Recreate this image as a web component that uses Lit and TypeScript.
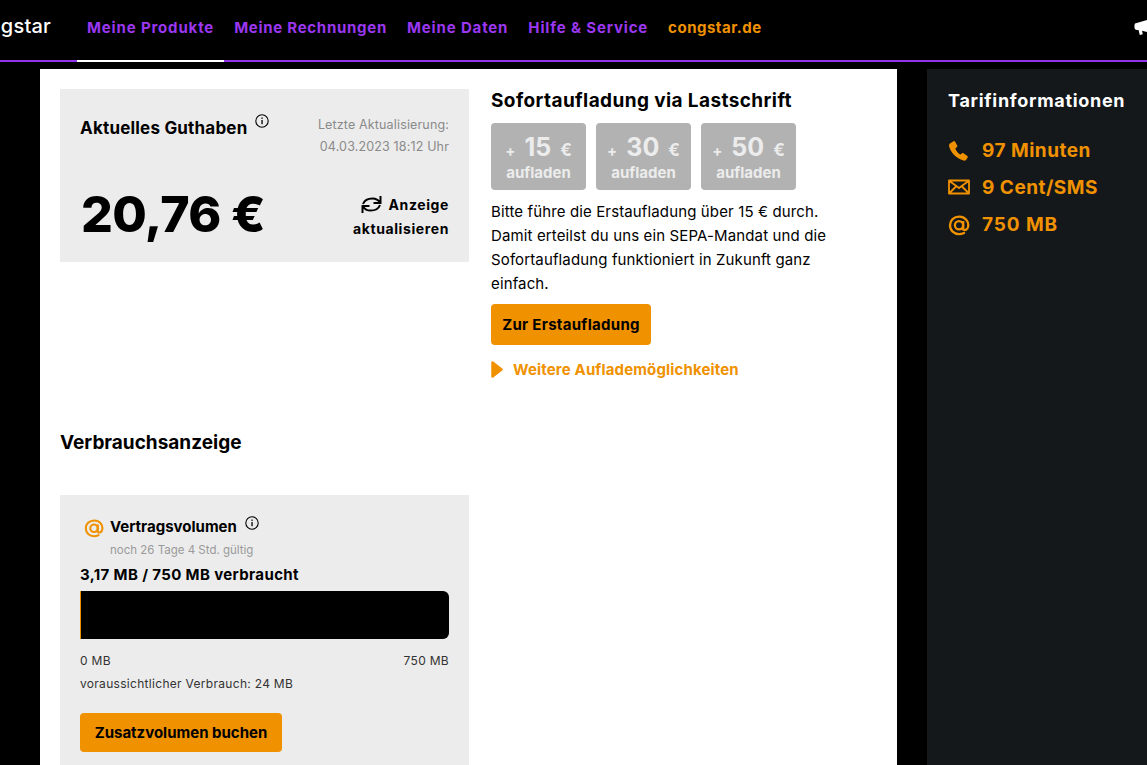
import { LitElement, css, html } from 'lit';
import { customElement } from 'lit/decorators.js';

const info = html`<svg class="info" viewBox="0 0 14 14" width="14" height="14">
  <circle cx="7" cy="7" r="6.2" fill="none" stroke="#000" stroke-width="1.1"></circle>
  <rect x="6.4" y="6" width="1.3" height="4.2" fill="#000"></rect>
  <rect x="6.4" y="3.5" width="1.3" height="1.4" fill="#000"></rect>
</svg>`;

const at = (size: number) => html`<svg viewBox="0 0 22 22" width=${size} height=${size}>
  <path d="M15.2 15.6c1.9 1 4.300.2 4.900-3 .9-5.300-3-9.900-8.900-9.900C5.700 2.700 2 6.500 2 11.300c0 5.300 4 8.800 9 8.800 1.900 0 3.500-.4 5-1.200" fill="none" stroke="#f09100" stroke-width="2.300" stroke-linecap="round"></path>
  <circle cx="11" cy="11.300" r="4.100" fill="none" stroke="#f09100" stroke-width="2.300"></circle>
  <path d="M15.200 7v8.200" fill="none" stroke="#f09100" stroke-width="2.300"></path>
</svg>`;

// bar track is 369px wide, the used part is snapped down to whole pixels
const usedWidth = Math.floor((3.17 / 750) * 369);

@customElement('app-root')
export class AppRoot extends LitElement {
  render() {
    return html`
      <header class="top">
        <div class="logo"><span>congstar</span></div>
        <nav class="nav">
          <a class="active">Meine Produkte</a>
          <a>Meine Rechnungen</a>
          <a class="wide">Meine Daten</a>
          <a class="wide">Hilfe &amp; Service</a>
          <a class="ext">congstar.de</a>
        </nav>
        <svg class="horn" viewBox="0 0 14 18" width="14" height="18">
          <path d="M1 5.500 13 2v12L8 12.800l.8 3.400-3 .8-1.300-5.100H3C1.500 11.900.4 10.800.4 8.700.4 7.300.6 6.300 1 5.500z" fill="#fff"></path>
        </svg>
      </header>
      <div class="main">
        <section class="panel">
          <div class="balance">
            <div class="balance-top">
              <div class="balance-title"><h3>Aktuelles Guthaben</h3>${info}</div>
              <div class="updated">Letzte Aktualisierung:<br />04.03.2023 18:12 Uhr</div>
            </div>
            <div class="balance-bottom">
              <div class="amount">20,76 €</div>
              <div class="refresh">
                <svg viewBox="0 0 21 19" width="21" height="19">
                  <path d="M19.500 1v7h-7M19 7.500C17.300 4.700 14.500 3.400 11.500 3.400 7.500 3.400 3.500 5 2 9M1.500 18v-7h7M2 11.500c1.700 2.800 4.500 4.100 7.500 4.100 4 0 8-1.600 9.500-5.600" fill="none" stroke="#000" stroke-width="2"></path>
                </svg>
                Anzeige<br />aktualisieren
              </div>
            </div>
          </div>
          <div class="topup">
            <h2>Sofortaufladung via Lastschrift</h2>
            <div class="amounts">
              ${[15, 30, 50].map(
                (n) => html`<div class="chip">
                  <div class="chip-num"><small>+</small><b>${n}</b><small class="eur">€</small></div>
                  <div class="chip-label">aufladen</div>
                </div>`
              )}
            </div>
            <p>Bitte führe die Erstaufladung über 15 € durch. Damit erteilst du uns ein SEPA-Mandat und die Sofortaufladung funktioniert in Zukunft ganz einfach.</p>
            <button class="btn first">Zur Erstaufladung</button>
            <a class="more">
              <svg viewBox="0 0 12 17" width="12" height="17"><path d="M1.500 1.500 10.500 8.500 1.500 15.500z" fill="#f09100" stroke="#f09100" stroke-width="2.500" stroke-linejoin="round"></path></svg>
              Weitere Auflademöglichkeiten
            </a>
          </div>
          <h2 class="usage-title">Verbrauchsanzeige</h2>
          <div class="usage">
            <div class="usage-head">
              <span class="usage-icon">${at(20)}</span>
              <div>
                <div class="usage-name"><h4>Vertragsvolumen</h4>${info}</div>
                <div class="valid">noch 26 Tage 4 Std. gültig</div>
              </div>
            </div>
            <div class="used">3,17 MB / 750 MB verbraucht</div>
            <div class="bar"><div class="fill" style="width:${usedWidth}px"></div></div>
            <div class="scale"><span>0 MB</span><span>750 MB</span></div>
            <div class="forecast">voraussichtlicher Verbrauch: 24 MB</div>
            <button class="btn extra">Zusatzvolumen buchen</button>
          </div>
        </section>
        <aside class="side">
          <h2>Tarifinformationen</h2>
          <ul>
            <li>
              <svg viewBox="0 0 22 22" width="22" height="22"><path d="M2 3.500 5.500 1.200c.6-.3 1.200-.1 1.500.4l2.200 4c.3.500.2 1-.2 1.400L7.300 8.500c.8 2.300 2.800 4.800 5.100 6.100l1.700-1.300c.5-.3 1-.3 1.400 0l3.900 2.600c.5.400.6 1 .3 1.500l-1.500 2.300c-.6.900-1.700 1.100-2.800.8C8.500 18.700 2.500 12.500 1.100 6.300.9 5.200 1.200 4.100 2 3.500z" fill="#f09100"></path></svg>
              97 Minuten
            </li>
            <li>
              <svg class="mail" viewBox="0 0 22 16" width="22" height="16"><path d="M1 1.500h20v13H1zM1.500 2l9.500 7 9.500-7M1.500 14l7-7M20.500 14l-7-7" fill="none" stroke="#f09100" stroke-width="1.800" stroke-linejoin="round"></path></svg>
              9 Cent/SMS
            </li>
            <li class="data">${at(22)} 750 MB</li>
          </ul>
        </aside>
      </div>
    `;
  }

  static styles = css`
    :host {
      display: block;
      width: 1147px;
      height: 765px;
      overflow: hidden;
      background: #000;
      font-family: 'Inter', 'Liberation Sans', sans-serif;
      color: #000;
    }
    h2, h3, h4, p, ul { margin: 0; padding: 0; }

    .top {
      display: flex;
      align-items: stretch;
      height: 60px;
      border-bottom: 2px solid #9333ea;
    }
    .logo {
      width: 77px;
      flex: none;
      position: relative;
      overflow: hidden;
    }
    .logo span {
      position: absolute;
      right: 26px;
      top: 14px;
      color: #fff;
      font-size: 20px;
      font-weight: 500;
      letter-spacing: 0.2px;
    }
    .nav { display: flex; }
    .nav a {
      padding: 0 10px;
      height: 62px;
      line-height: 55px;
      box-sizing: border-box;
      color: #9b37f0;
      font-size: 15px;
      font-weight: 700;
      letter-spacing: 0.72px;
    }
    .nav a.active { border-bottom: 2px solid #fff; letter-spacing: 0.85px; }
    .nav a.wide { letter-spacing: 0.85px; }
    .nav a.ext { color: #f09100; letter-spacing: 0.5px; }
    .horn { margin-left: auto; margin-top: 18px; margin-right: -1px; flex: none; }

    .main { display: flex; padding: 7px 0 0 40px; }
    .panel {
      width: 857px;
      flex: none;
      box-sizing: border-box;
      background: #fff;
      padding: 20px;
      display: grid;
      grid-template-columns: 409px 384px;
      column-gap: 22px;
      align-content: start;
    }
    .balance {
      background: #ececec;
      height: 173px;
      box-sizing: border-box;
      padding: 24px 20px 0;
    }
    .balance-top { display: flex; justify-content: space-between; height: 60px; }
    .balance-title { display: flex; align-items: flex-start; gap: 8px; padding-top: 4px; }
    h3 { font-size: 17px; font-weight: 700; line-height: 22px; letter-spacing: 0.2px; }
    .info { flex: none; margin-top: -3px; }
    .updated { font-size: 12.500px; line-height: 22px; color: #8a8a8a; text-align: right; letter-spacing: 0.15px; padding-top: 1px; }
    .balance-bottom { display: flex; justify-content: space-between; align-items: flex-start; margin-top: 11px; }
    .amount { font-size: 50px; font-weight: 800; line-height: 60px; padding-left: 1px; letter-spacing: -0.6px; }
    .refresh { font-size: 14px; font-weight: 700; line-height: 24px; text-align: right; letter-spacing: 0.6px; margin-top: 9px; }
    .refresh svg { vertical-align: -4px; margin-right: 3px; }

    h2 { font-size: 19px; font-weight: 700; letter-spacing: 0.4px; }
    .topup h2 { line-height: 22px; padding-top: 1px; margin-bottom: -1px; }
    .amounts { display: flex; gap: 10px; margin-top: 12px; }
    .chip {
      width: 95px;
      height: 67px;
      border-radius: 4px;
      background: #b2b2b2;
      color: #ececec;
      text-align: center;
      box-sizing: border-box;
      padding-top: 9px;
    }
    .chip-num { display: flex; justify-content: center; align-items: baseline; gap: 9px; line-height: 30px; }
    .chip-num b { font-size: 25px; font-weight: 700; }
    .chip-num small { font-size: 15px; font-weight: 700; }
    .chip-num .eur { font-size: 17px; }
    .chip-label { font-size: 15px; font-weight: 700; line-height: 19px; margin-top: -3px; }
    .topup p { font-size: 15px; line-height: 24px; width: 345px; margin-top: 10px; letter-spacing: 0.13px; }
    .btn {
      display: block;
      border: 0;
      border-radius: 4px;
      background: #f09100;
      color: #000;
      font: inherit;
      font-size: 15px;
      font-weight: 700;
      letter-spacing: 0.3px;
      padding: 0;
    }
    .first { width: 160px; height: 41px; margin-top: 8px; }
    .more {
      display: flex;
      align-items: center;
      gap: 10px;
      color: #f09100;
      font-size: 15px;
      font-weight: 700;
      letter-spacing: 0.15px;
      margin-top: 15px;
      height: 18px;
    }

    .usage-title { grid-column: 1 / -1; margin-top: 53px; line-height: 24px; letter-spacing: 0; }
    .usage {
      background: #ececec;
      margin-top: 40px;
      padding: 21px 20px 20px;
      height: 300px;
      box-sizing: border-box;
    }
    .usage-head { display: flex; gap: 6px; }
    .usage-icon { padding: 2px 0 0 4px; }
    .usage-name { display: flex; gap: 8px; align-items: flex-start; }
    h4 { font-size: 15px; font-weight: 700; line-height: 22px; }
    .usage-name .info { margin-top: 0; }
    .valid { font-size: 11.500px; line-height: 20px; color: #9a9a9a; margin-top: 2px; }
    .used { font-size: 15px; font-weight: 700; line-height: 22px; margin-top: 4px; letter-spacing: 0.37px; }
    .bar { height: 48px; background: #000; border-radius: 0 6px 6px 0; margin-top: 5px; overflow: hidden; }
    .fill { height: 100%; background: #f09100; }
    .scale { display: flex; justify-content: space-between; font-size: 12px; line-height: 20px; color: #333; margin-top: 12px; letter-spacing: 0.3px; }
    .forecast { font-size: 12px; line-height: 20px; color: #333; margin-top: 3px; letter-spacing: 0.3px; }
    .extra { width: 202px; height: 39px; margin-top: 19px; letter-spacing: 0; }

    .side {
      flex: none;
      width: 220px;
      margin-left: 30px;
      height: 700px;
      background: #14181b;
      color: #f09100;
      padding: 21px 21px;
      box-sizing: border-box;
    }
    .side h2 { color: #fff; line-height: 22px; font-size: 18px; letter-spacing: 0.7px; }
    .side ul { list-style: none; margin-top: 20px; }
    .side li {
      display: flex;
      align-items: center;
      gap: 12px;
      font-size: 19px;
      font-weight: 700;
      letter-spacing: 0.5px;
      height: 37px;
    }
    .side li.data { letter-spacing: 0.9px; }
    .side li svg { flex: none; }
    .side li .mail { margin-top: -2px; }
  `;
}

declare global {
  interface HTMLElementTagNameMap {
    'app-root': AppRoot;
  }
}
